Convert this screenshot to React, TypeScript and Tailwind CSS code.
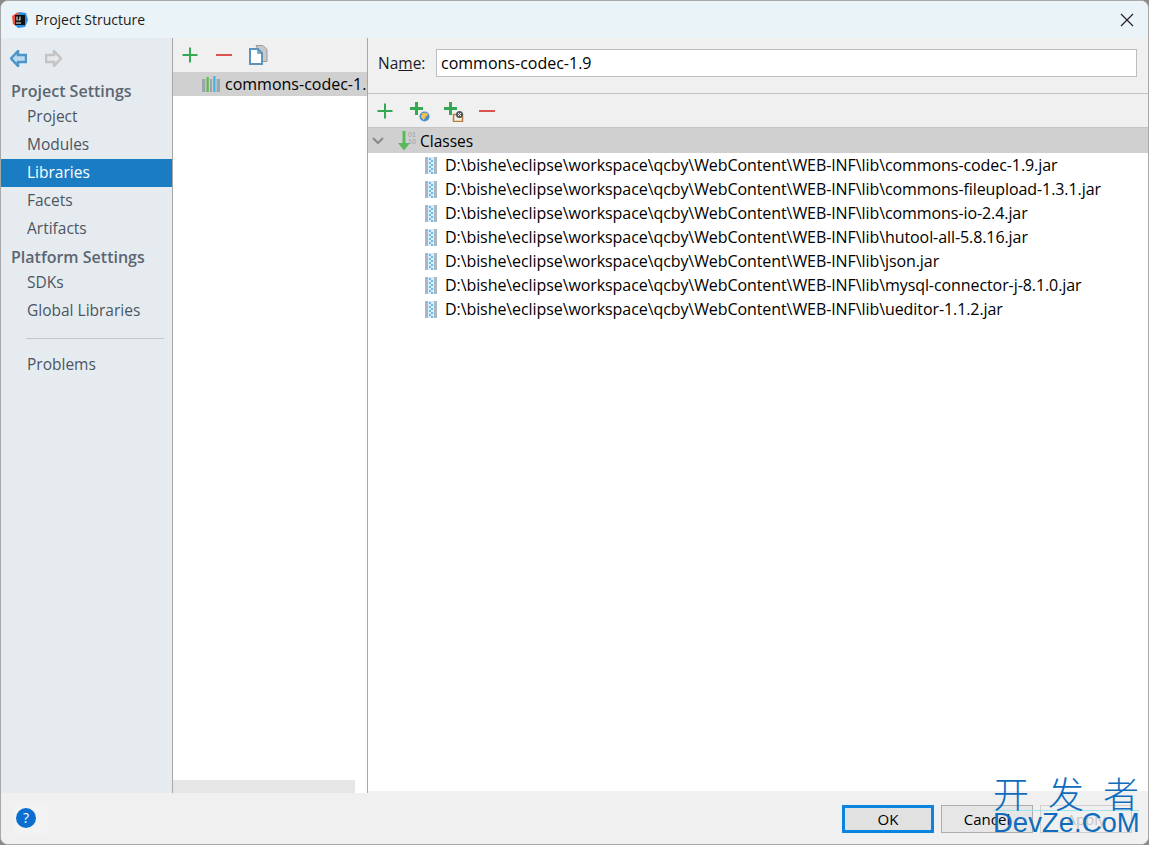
import React from 'react';

const font = { fontFamily: '"Open Sans", "Noto Sans", sans-serif' };

const jars = [
  'commons-codec-1.9.jar',
  'commons-fileupload-1.3.1.jar',
  'commons-io-2.4.jar',
  'hutool-all-5.8.16.jar',
  'json.jar',
  'mysql-connector-j-8.1.0.jar',
  'ueditor-1.1.2.jar',
];

const Plus = ({ size = 16 }: { size?: number }) => (
  <svg width={size} height={size} viewBox="0 0 16 16" className="block shrink-0">
    <path d="M8 .5v15M.5 8h15" stroke="#34a853" strokeWidth="2" />
  </svg>
);

const Minus = () => (
  <svg width="16" height="16" viewBox="0 0 16 16" className="block shrink-0">
    <path d="M0 8h16" stroke="#d9534f" strokeWidth="2" />
  </svg>
);

const PlusGlobe = () => (
  <svg width="20" height="20" viewBox="0 0 20 20" className="block shrink-0">
    <path d="M6.500 0v13M0 6.500h13" stroke="#34a853" strokeWidth="3" />
    <circle cx="14.500" cy="14.500" r="5" fill="#4a90c8" />
    <path d="M12 11.500c2-1 5-1 6 1-1 2-2 1-2.500 3-1 1-1.500 2-2 3-.5-2-2-2-2.500-3.500 0-1.500 1-2 1-3.500z" fill="#f2c14e" />
  </svg>
);

const PlusJar = () => (
  <svg width="20" height="20" viewBox="0 0 20 20" className="block shrink-0">
    <path d="M6.500 0v13M0 6.500h13" stroke="#34a853" strokeWidth="3" />
    <rect x="9.500" y="12.500" width="9" height="7" fill="#f5efe6" stroke="#b5813f" strokeWidth="1.500" />
    <circle cx="15.500" cy="12.500" r="3.500" fill="#555" />
    <path d="M14 11l3 3M17 11l-3 3" stroke="#fff" strokeWidth="1" />
  </svg>
);

const CopyIcon = () => (
  <svg width="19" height="20" viewBox="0 0 19 20" className="block shrink-0">
    <path d="M7 .5h7l4 4v12h-4z" fill="#c9c9c9" stroke="#9a9a9a" strokeWidth="1" />
    <path d="M1 4h8l4 4v11H1z" fill="#fff" stroke="#5b93bd" strokeWidth="2" />
    <path d="M9 4v4h4" fill="none" stroke="#5b93bd" strokeWidth="1.500" />
  </svg>
);

const LibIcon = () => (
  <svg width="18" height="16" viewBox="0 0 16 16" preserveAspectRatio="none" className="block shrink-0">
    <rect x="0" y="3" width="3" height="13" fill="#9aa7b0" />
    <rect x="4" y="1" width="2" height="15" fill="#62b543" />
    <rect x="7" y="3" width="2" height="13" fill="#9aa7b0" />
    <rect x="10" y="0" width="2" height="16" fill="#40b6e0" />
    <rect x="13" y="3" width="3" height="13" fill="#9aa7b0" />
  </svg>
);

const JarIcon = () => (
  <svg width="12" height="17" viewBox="0 0 12 17" className="block shrink-0">
    <rect x="0" y="0" width="12" height="17" fill="#a9b7c2" />
    <rect x="3" y="0" width="6" height="17" fill="#d9eef8" />
    <path d="M4 1h2v2H4zM6 3h2v2H6zM4 5h2v2H4zM6 7h2v2H6zM4 9h2v2H4zM6 11h2v2H6zM4 13h2v2H4zM6 15h2v2H6z" fill="#6cbce2" />
  </svg>
);

const SortIcon = () => (
  <svg width="20" height="20" viewBox="0 0 20 20" className="block shrink-0">
    <path d="M6 0v16" stroke="#5cb85c" strokeWidth="3" />
    <path d="M0 12l6 7.500 6-7.500z" fill="#5cb85c" />
    <text x="10" y="6" fontSize="7" fill="#9aa0a6" fontFamily="Liberation Sans">01</text>
    <text x="10" y="13" fontSize="7" fill="#9aa0a6" fontFamily="Liberation Sans">10</text>
  </svg>
);

const SideItem = ({ label, active }: { label: string; active?: boolean }) => (
  <div className={`h-7 pl-[26px] leading-[26px] text-[15.5px] ${active ? 'bg-[#1a7dc4] text-white' : 'text-[#4b5663]'}`}>
    {label}
  </div>
);

const SideHead = ({ label, className }: { label: string; className: string }) => (
  <div className={`pl-[10px] text-[16px] font-semibold text-[#5b6672] whitespace-nowrap ${className}`}>{label}</div>
);

const App = () => {
  return (
    <div className="w-[1149px] h-[845px] overflow-hidden relative bg-[#8a8a8a]" style={font}>
      <div className="w-full h-full flex flex-col rounded-[8px] overflow-hidden border border-[#a8a8a8] bg-[#f0f0f0]">
        <div className="h-[37px] shrink-0 bg-[#eaf3f8] flex items-center pl-[11px] pr-[14px]">
          <svg width="16" height="16" viewBox="0 0 16 16" className="block shrink-0">
            <path d="M0 4l6-4 3 6-5 8-3-2z" fill="#f0523d" />
            <path d="M7 0l7 1 2 7-3 7-7 1-3-3z" fill="#2a8ee0" />
            <rect x="3" y="3" width="10" height="10" fill="#111" />
            <rect x="4" y="10.500" width="5" height="1" fill="#fff" />
            <path d="M5 4.500v4M8 4.500v3.500H6.500" stroke="#fff" strokeWidth="1" fill="none" />
          </svg>
          <span className="ml-[7px] text-[14px] text-[#1c1c1c]">Project Structure</span>
          <svg width="14" height="14" viewBox="0 0 14 14" className="block ml-auto">
            <path d="M1 1l12 12M13 1L1 13" stroke="#222" strokeWidth="1.200" />
          </svg>
        </div>

        <div className="flex-1 flex min-h-0">
          <div className="w-[172px] shrink-0 bg-[#e6ebf0] border-r border-[#a8a8a8]">
            <div className="h-[40px] flex items-center pl-[9px] gap-[18px]">
              <svg width="17" height="17" viewBox="0 0 17 17" className="block">
                <path d="M8 1L1 8.500 8 16v-4h8V5H8z" fill="#bcdaee" stroke="#4d95c8" strokeWidth="2.500" />
              </svg>
              <svg width="17" height="17" viewBox="0 0 17 17" className="block">
                <path d="M9 1l7 7.500L9 16v-4H1V5h8z" fill="#e8e8e8" stroke="#c4c4c4" strokeWidth="2.500" />
              </svg>
            </div>
            <SideHead label="Project Settings" className="h-[25px] leading-[27px]" />
            <SideItem label="Project" />
            <SideItem label="Modules" />
            <SideItem label="Libraries" active />
            <SideItem label="Facets" />
            <SideItem label="Artifacts" />
            <SideHead label="Platform Settings" className="h-[26px] leading-[29px]" />
            <SideItem label="SDKs" />
            <SideItem label="Global Libraries" />
            <div className="mt-[13px] mb-[12px] ml-[25px] mr-[8px] h-px bg-[#c4c8cc]" />
            <SideItem label="Problems" />
          </div>

          <div className="w-[195px] shrink-0 bg-white border-r border-[#a8a8a8] flex flex-col">
            <div className="h-[34px] bg-[#f0f0f0] flex items-center pl-[9px]">
              <Plus />
              <span className="ml-[18px]"><Minus /></span>
              <span className="ml-[17px]"><CopyIcon /></span>
            </div>
            <div className="h-[24px] bg-[#d0d0d0] flex items-center pl-[29px] overflow-hidden whitespace-nowrap">
              <LibIcon />
              <span className="ml-[5px] text-[16px] text-black">commons-codec-1.9</span>
            </div>
            <div className="flex-1" />
            <div className="h-[13px] w-[182px] bg-[#e6e6e6]" />
          </div>

          <div className="flex-1 min-w-0 bg-white flex flex-col">
            <div className="h-[56px] bg-[#f0f0f0] border-b border-[#c4c4c4] flex items-start pl-[10px] pr-[11px] pt-[11px] shrink-0">
              <span className="w-[47px] leading-[28px] text-[15.5px] text-[#1c1c1c] whitespace-nowrap">Na<span className="underline">m</span>e:</span>
              <div className="ml-[11px] flex-1 h-[28px] bg-white border border-[#bdbdbd] pl-[4px] leading-[26px] text-[16px] text-black">
                commons-codec-1.9
              </div>
            </div>
            <div className="h-[34px] bg-[#f0f0f0] border-b border-[#c4c4c4] flex items-center pl-[9px] shrink-0">
              <Plus />
              <span className="ml-[17px] mt-[3px]"><PlusGlobe /></span>
              <span className="ml-[14px] mt-[3px]"><PlusJar /></span>
              <span className="ml-[15px]"><Minus /></span>
            </div>
            <div className="h-[25px] bg-[#d0d0d0] flex items-center pl-[4px] shrink-0">
              <svg width="12" height="8" viewBox="0 0 12 8" className="block">
                <path d="M1 1l5 5 5-5" stroke="#8a8a8a" strokeWidth="2" fill="none" />
              </svg>
              <span className="ml-[14px]"><SortIcon /></span>
              <span className="ml-[2px] text-[15.5px] leading-[26px] text-black">Classes</span>
            </div>
            {jars.map((jar) => (
              <div key={jar} className="h-[24px] flex items-center pl-[57px] shrink-0">
                <JarIcon />
                <span className="ml-[8px] text-[16px] leading-[26px] tracking-[-0.08px] text-black whitespace-nowrap">
                  {'D:\\bishe\\eclipse\\workspace\\qcby\\WebContent\\WEB-INF\\lib\\' + jar}
                </span>
              </div>
            ))}
            <div className="flex-1" />
            <div className="h-[2px] bg-[#f0f0f0] shrink-0" />
          </div>
        </div>

        <div className="h-[51px] shrink-0 bg-[#f0f0f0] flex items-start pl-[14px] pr-[16px] pt-[10px]">
          <div className="w-[33px] h-[30px] bg-[#f3f3f3] flex items-center pl-[1px]">
            <div className="w-[20px] h-[20px] rounded-full bg-[#0a6fcf] text-white text-[14px] leading-[20px] text-center">?</div>
          </div>
          <div className="ml-auto mt-[2px] flex gap-[7px]">
            <div className="w-[92px] h-[28px] bg-[#e1e1e1] border-[3px] border-[#0a84e0] text-[15px] leading-[22px] text-center text-black">OK</div>
            <div className="w-[92px] h-[28px] bg-[#e6e6e6] border border-[#adadad] text-[15px] leading-[26px] text-center text-black">Cancel</div>
            <div className="w-[92px] h-[28px] bg-[#f0f0f0] border border-[#cfcfcf] text-[15px] leading-[26px] text-center text-[#c4c4c4]">Apply</div>
          </div>
        </div>
      </div>

      <div className="absolute left-[993px] top-[774px] w-[146px] text-[#0f6cbd] pointer-events-none">
        <div className="flex justify-between text-[36px] leading-[36px] font-light" style={{ fontFamily: '"Noto Sans CJK SC", sans-serif' }}>
          <span>开</span>
          <span>发</span>
          <span>者</span>
        </div>
        <div className="h-px bg-[#9fe3ee]" />
        <div className="text-[27.5px] leading-[24px] whitespace-nowrap" style={{ fontFamily: '"Liberation Sans", sans-serif' }}>DevZe.CoM</div>
      </div>
    </div>
  );
};

export default App;
